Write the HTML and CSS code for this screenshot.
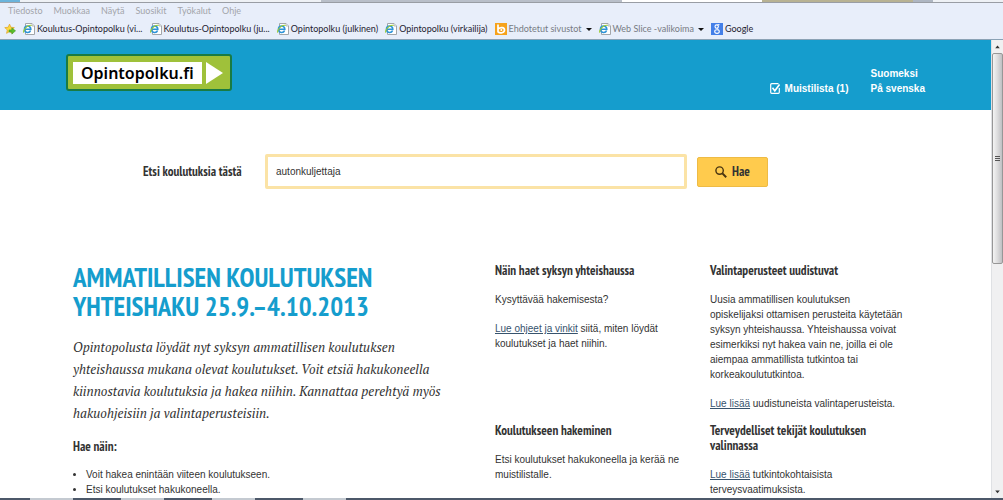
FILE: index.html
```html
<!DOCTYPE html>
<html lang="fi">
<head>
<meta charset="utf-8">
<title>Opintopolku.fi</title>
<link rel="stylesheet" href="styles.css">
</head>
<body>
<svg class="defs" aria-hidden="true">
  <symbol id="page-icon" viewBox="0 0 12 12">
    <path d="M2.500.5h6.500l2.500 2.500v8.500h-9z" fill="#fff" stroke="#a2a6aa"/>
    <path d="M9 .5v2.500h2.500" fill="#eee" stroke="#a2a6aa" stroke-width=".7"/>
    <path d="M1.600 6.200h6.200C7.800 1.900 1.500 2 1.500 6.200c0 4 5 4.200 6.100 1.300" fill="none" stroke="#2d93d8" stroke-width="1.600"/>
    <path d="M.6 9.600C.2 6 5 1.400 8.600 2.500" fill="none" stroke="#9dcc35" stroke-width="1.100"/>
  </symbol>
</svg>
<header class="browser">
  <div class="tabs"><span class="tab-favicon"></span><span class="tab-shade"></span><span class="tab-active"></span><span class="tab-tan"></span><span class="tab-end"></span></div>
  <nav class="menu" aria-label="Valikko">
    <button>Tiedosto</button><button>Muokkaa</button><button>Näytä</button><button>Suosikit</button><button>Työkalut</button><button>Ohje</button>
  </nav>
  <nav class="favourites" aria-label="Suosikit">
    <button class="add" aria-label="Lisää suosikkeihin"><svg viewBox="0 0 13 12"><path d="M6 .7l1.500 3.400 3.700.4-2.800 2.500.8 3.700L6 8.800l-3.200 1.900.8-3.700L.8 4.500l3.700-.4z" fill="#ffd83c" stroke="#dfa52c" stroke-width=".8"/><path d="M5.500 7h3V4.800L12.500 8l-4 3.500V9.300h-3z" fill="#5abf2b" stroke="#3b9420" stroke-width=".6"/></svg></button>
    <a href="#"><svg><use href="#page-icon"/></svg>Koulutus-Opintopolku (vi...</a>
    <a href="#"><svg><use href="#page-icon"/></svg>Koulutus-Opintopolku (ju...</a>
    <a href="#"><svg><use href="#page-icon"/></svg>Opintopolku (julkinen)</a>
    <a href="#"><svg><use href="#page-icon"/></svg>Opintopolku (virkailija)</a>
    <button class="dim"><svg viewBox="0 0 12 12"><path d="M0 0h12v12H0z" fill="#f6a21b"/><path d="M3 1.500v7.300c2 2 6.500 1 6.500-1.800S5.500 3.800 3 6" fill="none" stroke="#fff" stroke-width="1.700"/><circle cx="6.300" cy="7" r="1" fill="#fff"/></svg>Ehdotetut sivustot<span class="caret"></span></button>
    <button class="dim"><svg><use href="#page-icon"/></svg>Web Slice -valikoima<span class="caret"></span></button>
    <a href="#"><svg viewBox="0 0 12 12"><path d="M0 0h12v12H0z" fill="#437fe8"/><circle cx="5.700" cy="3.600" r="1.700" fill="none" stroke="#fff" stroke-width="1.100"/><ellipse cx="6" cy="8.600" rx="2.300" ry="1.800" fill="none" stroke="#fff" stroke-width="1.100"/><path d="M6.500 1.700h2M6.500 5.200l.7 1.600" stroke="#fff" stroke-width="1"/></svg>Google</a>
  </nav>
</header>
<div class="viewport">
  <div class="page">
    <header class="site-header">
      <a class="logo" href="#"><span class="logo-name">Opintopolku.fi</span><svg viewBox="0 0 17 22"><path d="M0 0l17 11L0 22z" fill="#fff"/></svg></a>
      <nav class="site-links" aria-label="Sivusto">
        <a class="memo" href="#"><svg viewBox="0 0 10 11"><path d="M8.500.7H1.700Q.7.700.7 1.700v7.600q0 1 1 1h6.600q1 0 1-1V5" fill="none" stroke="#fff" stroke-width="1.200"/><path d="M2.500 4.800l2.300 3L9.500 1.500" fill="none" stroke="#fff" stroke-width="1.600"/></svg>Muistilista (1)</a>
        <div class="languages"><a href="#">Suomeksi</a><a href="#">På svenska</a></div>
      </nav>
    </header>
    <form class="search">
      <label for="query">Etsi koulutuksia tästä</label>
      <input id="query" type="text" value="autonkuljettaja">
      <button type="button"><svg viewBox="0 0 12 12"><circle cx="4.600" cy="4.600" r="3.700" fill="none" stroke="#4a3510" stroke-width="1.400"/><path d="M7.400 7.400l3.800 3.800" stroke="#4a3510" stroke-width="2"/></svg>Hae</button>
    </form>
    <main class="content">
      <article class="lead">
        <h1>AMMATILLISEN KOULUTUKSEN YHTEISHAKU 25.9.–4.10.2013</h1>
        <p class="intro">Opintopolusta löydät nyt syksyn ammatillisen koulutuksen<br>yhteishaussa mukana olevat koulutukset. Voit etsiä hakukoneella<br>kiinnostavia koulutuksia ja hakea niihin. Kannattaa perehtyä myös<br>hakuohjeisiin ja valintaperusteisiin.</p>
        <h2>Hae näin:</h2>
        <ul><li>Voit hakea enintään viiteen koulutukseen.</li><li>Etsi koulutukset hakukoneella.</li></ul>
      </article>
      <div class="topics">
        <section><h2>Näin haet syksyn yhteishaussa</h2><p>Kysyttävää hakemisesta?</p><p><a href="#">Lue ohjeet ja vinkit</a> siitä, miten löydät<br>koulutukset ja haet niihin.</p></section>
        <section><h2>Valintaperusteet uudistuvat</h2><p>Uusia ammatillisen koulutuksen<br>opiskelijaksi ottamisen perusteita käytetään<br>syksyn yhteishaussa. Yhteishaussa voivat<br>esimerkiksi nyt hakea vain ne, joilla ei ole<br>aiempaa ammatillista tutkintoa tai<br>korkeakoulututkintoa.</p><p><a href="#">Lue lisää</a> uudistuneista valintaperusteista.</p></section>
        <section><h2>Koulutukseen hakeminen</h2><p>Etsi koulutukset hakukoneella ja kerää ne<br>muistilistalle.</p></section>
        <section><h2>Terveydelliset tekijät koulutuksen<br>valinnassa</h2><p><a href="#">Lue lisää</a> tutkintokohtaisista<br>terveysvaatimuksista.</p></section>
      </div>
    </main>
  </div>
  <div class="scrollbar" aria-hidden="true">
    <svg class="arrow" viewBox="0 0 12 12"><path d="M3.500 8L6 5l2.500 3z" fill="#333"/></svg>
    <div class="thumb"><i></i><i></i><i></i></div>
    <svg class="arrow down" viewBox="0 0 12 12"><path d="M3.500 5L6 8l2.500-3z" fill="#333"/></svg>
  </div>
</div>
<footer class="taskbar"><span></span><span></span><span></span><span></span></footer>
</body>
</html>
```
FILE: styles.css
```css
* { box-sizing: border-box; }
body { margin: 0; height: 100vh; display: flex; flex-direction: column; overflow: hidden; background: #fff; color: #333; font: 10px/15px "Liberation Sans", Arial, sans-serif; }
a { color: inherit; text-decoration: none; }
button { padding: 0; border: 0; background: none; color: inherit; font: inherit; }
h1, h2, p, ul { margin: 0; }
.defs { position: absolute; width: 0; height: 0; }

.browser { flex: none; height: 40px; background: #e8eefa; border-bottom: 1px solid #8ba2b5; font: 9px/14px Lato, "Open Sans", sans-serif; overflow: hidden; }
.tabs { display: flex; height: 3px; background: #eef1f5; border-bottom: 1px solid #999da4; }
.tab-favicon { width: 2%; margin-right: 30%; background: #6ab4dc; }
.tab-shade { width: 30%; background: #b9bfc9; }
.tab-active { width: 14%; background: #fff; }
.tab-tan { width: 15%; background: #b8b293; }
.tab-end { width: 2%; background: #aeb6c2; }
.menu { display: flex; gap: 11px; height: 16px; padding-left: 8px; color: #a3a5aa; align-items: center; }
.favourites { display: flex; align-items: center; gap: 7px; height: 20px; padding-left: 4px; color: #1e2230; white-space: nowrap; }
.favourites a, .favourites button { display: flex; align-items: center; gap: 2px; }
.favourites svg { width: 12px; height: 12px; }
.favourites .dim { color: #777b83; }
.caret { margin-left: 2px; border: 3px solid transparent; border-top-color: #111; border-bottom: 0; }

.viewport { flex: 1; min-height: 0; display: flex; }
.page { flex: 1; min-width: 0; overflow: hidden; }
.site-header { display: flex; justify-content: space-between; height: 70px; padding: 14px 66px; background: #159dcd; color: #fff; }
.logo { display: flex; align-items: center; gap: 4px; height: 37px; padding: 0 7px 0 5px; border: 2px solid #197b43; border-radius: 3px; background: #9fc13a; }
.logo-name { padding: 0 8px; background: #fff; color: #000; font: 600 16px/22px "Noto Sans", sans-serif; }
.logo svg { width: 17px; height: 22px; }
.site-links { display: flex; align-items: flex-end; gap: 22px; font-weight: 700; }
.memo { display: flex; align-items: center; gap: 5px; }
.memo svg { width: 10px; height: 11px; }
.languages { display: flex; flex-direction: column; }

.search { display: flex; align-items: center; padding: 44px 223px 0 143px; }
.search label, .search button, h1, h2 { font-family: "PT Sans Narrow", "Roboto Condensed", "Liberation Sans Narrow", sans-serif; font-weight: 700; }
.search label { width: 122px; font-size: 13px; }
.search input { flex: 1; min-width: 0; height: 35px; margin-right: 10px; padding: 0 8px; border: 3px solid #fbe3a6; border-radius: 2px; outline: 0; background: #fff; color: #333; font: 10px/15px "Liberation Sans", Arial, sans-serif; }
.search button { display: flex; align-items: center; justify-content: center; gap: 5px; width: 71px; height: 30px; border: 1px solid #eebb45; border-radius: 2px; background: #ffcb4d; color: #333; font-size: 13px; }
.search button svg { width: 12px; height: 12px; }

.content { display: grid; grid-template-columns: minmax(0, 49fr) minmax(0, 50fr); gap: 30px; padding: 74px 96px 0 73px; }
h1 { max-width: 320px; color: #159dcd; font-size: 27px; line-height: 29px; }
h2 { font-size: 13px; line-height: 15px; }
.intro { margin: 15px 0; font: italic 13px/22px "PT Serif", "Liberation Serif", serif; white-space: nowrap; }
ul { margin-top: 13px; padding: 0 0 0 13px; }
.topics { display: grid; grid-template-columns: minmax(0, 1fr) minmax(0, 1fr); gap: 12px 30px; align-content: start; white-space: nowrap; }
.topics p { margin-top: 14px; }
.topics a { color: #37536d; text-decoration: underline; }

.scrollbar { flex: none; display: flex; flex-direction: column; width: 12px; background: #f0f0f1; border-left: 1px solid #dfe1e4; }
.arrow { width: 11px; height: 13px; }
.down { margin-top: auto; }
.thumb { display: flex; flex-direction: column; align-items: center; justify-content: center; gap: 1px; height: 211px; border: 1px solid #979797; border-radius: 2px; background: linear-gradient(90deg, #f4f4f4, #dcdcdd 50%, #bfc0c3); }
.thumb i { width: 5px; height: 1px; background: #555; }
.taskbar { flex: none; display: flex; gap: 48px; height: 2px; padding-left: 30px; background: #4c5869; }
.taskbar span { width: 43px; background: #c4cad1; }
```
